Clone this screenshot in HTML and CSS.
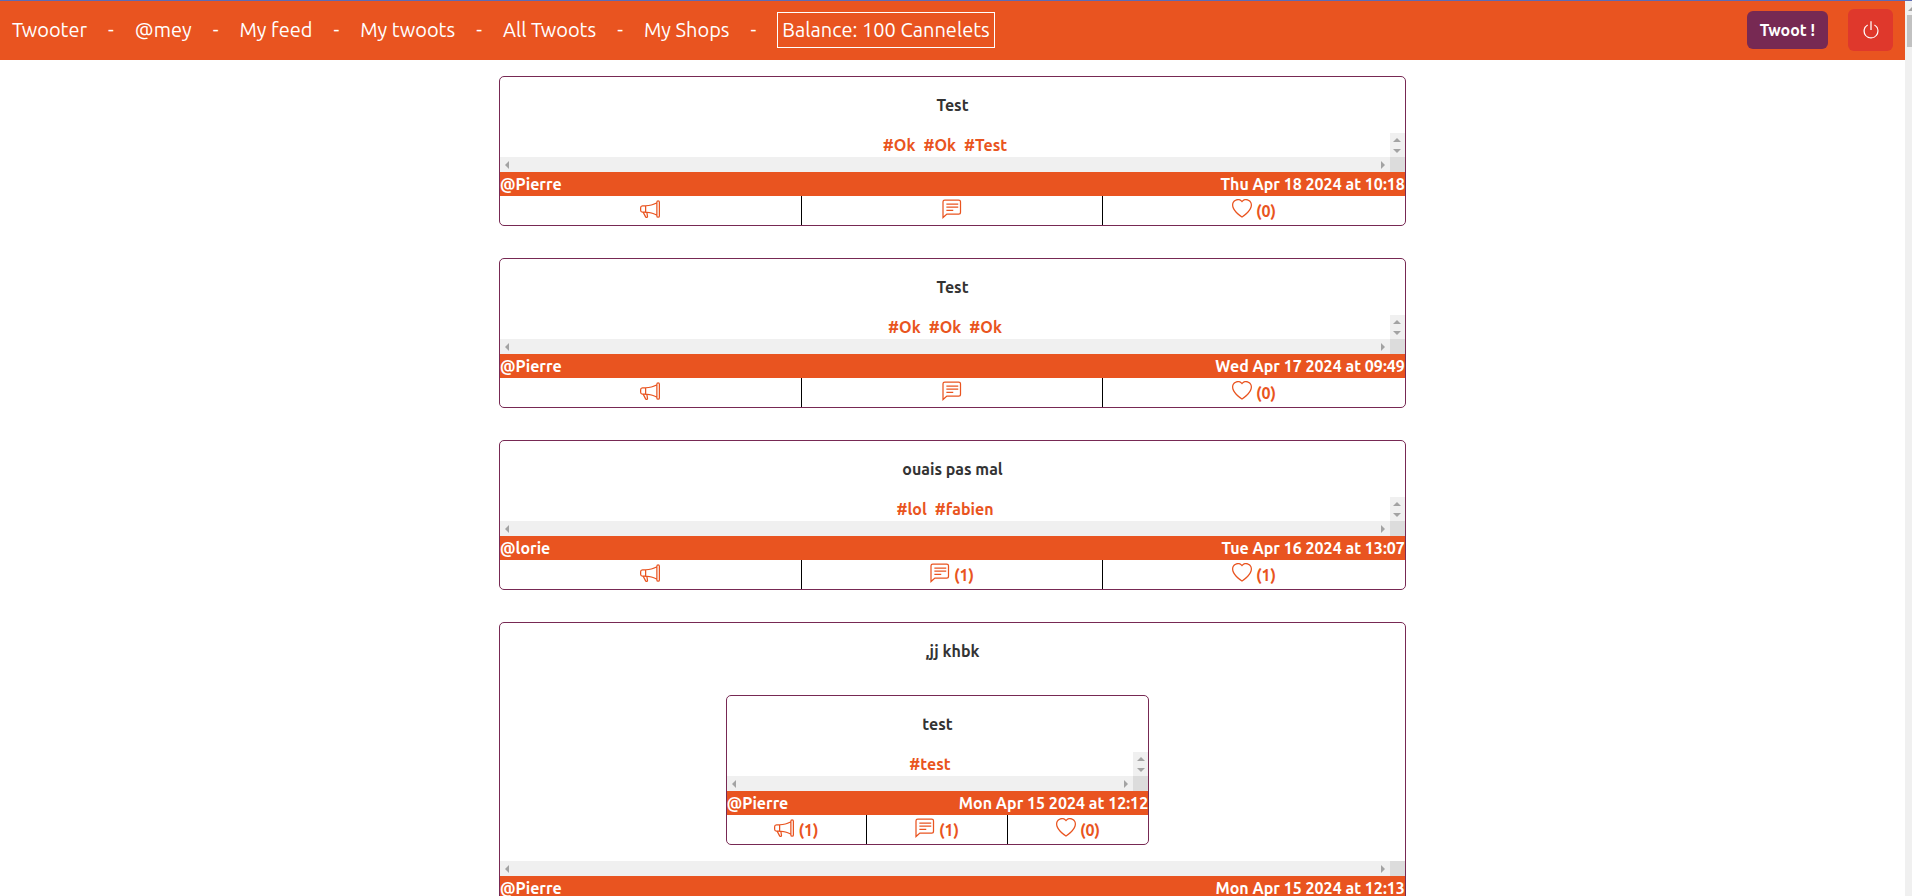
FILE: index.html
```
<!DOCTYPE html>
<html lang="en">
<head>
<meta charset="utf-8">
<title>Twooter</title>
<link rel="stylesheet" href="styles.css">
</head>
<body>
<svg class="sprite" aria-hidden="true">
  <symbol id="megaphone" viewBox="0 0 16 16"><path d="M13 2.5a1.5 1.5 0 0 1 3 0v11a1.5 1.5 0 0 1-3 0v-.214c-2.162-1.241-4.49-1.843-6.912-2.083l.405 2.712A1 1 0 0 1 5.51 15.1h-.548a1 1 0 0 1-.916-.599l-1.85-3.49-.202-.003A2.014 2.014 0 0 1 0 9V7a2.02 2.02 0 0 1 1.992-2.013 75 75 0 0 0 2.483-.075c3.043-.154 6.148-.849 8.525-2.199zm1 0v11a.5.5 0 0 0 1 0v-11a.5.5 0 0 0-1 0m-1 1.35c-2.344 1.205-5.209 1.842-8 2.033v4.233q.27.015.537.036c2.568.189 5.093.744 7.463 1.993zm-9 6.215v-4.13a95 95 0 0 1-1.992.052A1.02 1.02 0 0 0 1 7v2c0 .55.448 1.002 1.006 1.009A61 61 0 0 1 4 10.065m-.657.975 1.609 3.037.01.024h.548l-.002-.014-.443-2.966a68 68 0 0 0-1.722-.082z"/></symbol>
  <symbol id="chat" viewBox="0 0 16 16"><path d="M1.5 14.8V2.200Q1.500.800 2.900.800H14Q15.500.800 15.500 2.200V10.500Q15.500 12 14 12H4.600z" transform="translate(-.7 0)" fill="none" stroke="currentColor"/><path d="M3.500 4h9.500M3.500 6.500h9.500M3.500 9h5.500" fill="none" stroke="currentColor"/></symbol>
  <symbol id="heart" viewBox="0 0 16 16"><path d="m8 2.748-.717-.737C5.600.281 2.514.878 1.400 3.053c-.523 1.023-.641 2.500.314 4.385.920 1.815 2.834 3.989 6.286 6.357 3.452-2.368 5.365-4.542 6.286-6.357.955-1.886.838-3.362.314-4.385C13.486.878 10.400.280 8.717 2.010zM8 15C-7.333 4.868 3.279-3.040 7.824 1.143q.090.083.176.171a3 3 0 0 1 .176-.170C12.720-3.042 23.333 4.867 8 15"/></symbol>
</svg>
<div class="window">
  <div class="page">
    <header class="topbar">
      <nav class="menu">
        <a href="#">Twooter</a><span>-</span>
        <a href="#">@mey</a><span>-</span>
        <a href="#">My feed</a><span>-</span>
        <a href="#">My twoots</a><span>-</span>
        <a href="#">All Twoots</a><span>-</span>
        <a href="#">My Shops</a><span>-</span>
        <a href="#" class="balance">Balance: 100 Cannelets</a>
      </nav>
      <div class="session">
        <button class="twoot-button" type="button">Twoot !</button>
        <button class="logout" type="button" aria-label="Log out"><svg viewBox="0 0 16 16"><path d="M7.500 1v7h1V1z"/><path d="M3 8.812a5 5 0 0 1 2.578-4.375l-.485-.874A6 6 0 1 0 11 3.616l-.501.865A5 5 0 1 1 3 8.812"/></svg></button>
      </div>
    </header>
    <main class="feed">
      <article class="twoot">
        <p class="message">Test</p>
        <div class="tags"><div class="links"><a href="#">#Ok</a><a href="#">#Ok</a><a href="#">#Test</a></div><div class="vscroll"><i class="up"></i><i class="down"></i></div></div>
        <div class="hscroll"><i class="left"></i><i class="right"></i><b></b></div>
        <div class="meta"><a href="#">@Pierre</a><time>Thu Apr 18 2024 at 10:18</time></div>
        <div class="actions"><button type="button" aria-label="Retwoot"><svg><use href="#megaphone"/></svg></button><button type="button" aria-label="Comment"><svg><use href="#chat"/></svg></button><button type="button" aria-label="Like"><svg><use href="#heart"/></svg><span>(0)</span></button></div>
      </article>
      <article class="twoot">
        <p class="message">Test</p>
        <div class="tags"><div class="links"><a href="#">#Ok</a><a href="#">#Ok</a><a href="#">#Ok</a></div><div class="vscroll"><i class="up"></i><i class="down"></i></div></div>
        <div class="hscroll"><i class="left"></i><i class="right"></i><b></b></div>
        <div class="meta"><a href="#">@Pierre</a><time>Wed Apr 17 2024 at 09:49</time></div>
        <div class="actions"><button type="button" aria-label="Retwoot"><svg><use href="#megaphone"/></svg></button><button type="button" aria-label="Comment"><svg><use href="#chat"/></svg></button><button type="button" aria-label="Like"><svg><use href="#heart"/></svg><span>(0)</span></button></div>
      </article>
      <article class="twoot">
        <p class="message">ouais pas mal</p>
        <div class="tags"><div class="links"><a href="#">#lol</a><a href="#">#fabien</a></div><div class="vscroll"><i class="up"></i><i class="down"></i></div></div>
        <div class="hscroll"><i class="left"></i><i class="right"></i><b></b></div>
        <div class="meta"><a href="#">@lorie</a><time>Tue Apr 16 2024 at 13:07</time></div>
        <div class="actions"><button type="button" aria-label="Retwoot"><svg><use href="#megaphone"/></svg></button><button type="button" aria-label="Comment"><svg><use href="#chat"/></svg><span>(1)</span></button><button type="button" aria-label="Like"><svg><use href="#heart"/></svg><span>(1)</span></button></div>
      </article>
      <article class="twoot">
        <p class="message">,jj khbk</p>
        <div class="quoted">
          <article class="twoot">
            <p class="message">test</p>
            <div class="tags"><div class="links"><a href="#">#test</a></div><div class="vscroll"><i class="up"></i><i class="down"></i></div></div>
            <div class="hscroll"><i class="left"></i><i class="right"></i><b></b></div>
            <div class="meta"><a href="#">@Pierre</a><time>Mon Apr 15 2024 at 12:12</time></div>
            <div class="actions"><button type="button" aria-label="Retwoot"><svg><use href="#megaphone"/></svg><span>(1)</span></button><button type="button" aria-label="Comment"><svg><use href="#chat"/></svg><span>(1)</span></button><button type="button" aria-label="Like"><svg><use href="#heart"/></svg><span>(0)</span></button></div>
          </article>
        </div>
        <div class="hscroll"><i class="left"></i><i class="right"></i><b></b></div>
        <div class="meta"><a href="#">@Pierre</a><time>Mon Apr 15 2024 at 12:13</time></div>
        <div class="actions"><button type="button" aria-label="Retwoot"><svg><use href="#megaphone"/></svg></button><button type="button" aria-label="Comment"><svg><use href="#chat"/></svg></button><button type="button" aria-label="Like"><svg><use href="#heart"/></svg><span>(0)</span></button></div>
      </article>
    </main>
  </div>
  <div class="page-scroll"><i class="up"></i><b></b></div>
</div>
</body>
</html>
```
FILE: styles.css
```
* { box-sizing: border-box; }
body {
  margin: 0;
  background: #fff;
  color: #333;
  font: 16px/24px Ubuntu, "Noto Sans", sans-serif;
}
a { color: inherit; text-decoration: none; }
button { font: inherit; color: inherit; border: 0; padding: 0; background: none; cursor: pointer; }
.sprite { display: none; }
.window {
  display: flex;
  height: 100vh;
  overflow: hidden;
  border-top: 1px solid #5c6bb5;
}
.page { flex: 1; min-width: 0; }

.topbar {
  display: flex;
  justify-content: space-between;
  align-items: center;
  padding: 8px 12px 9px;
  background: #e95420;
  color: #fff;
}
.menu { display: flex; align-items: center; gap: 21px; font-size: 20px; line-height: 28px; }
.balance { border: 1px solid #fff; padding: 3px 4px; }
.session { display: flex; align-items: center; gap: 20px; }
.twoot-button {
  padding: 7px 13px;
  border-radius: 6px;
  background: #772953;
  font-weight: 700;
}
.logout {
  display: flex;
  align-items: center;
  justify-content: center;
  width: 45px;
  height: 42px;
  border-radius: 6px;
  background: #df382c;
}
.logout svg { width: 20px; height: 20px; fill: #fff; }

.feed {
  display: flex;
  flex-direction: column;
  align-items: center;
  gap: 32px;
  padding-top: 16px;
}
.twoot {
  width: 47.6%;
  border: 1px solid #772953;
  border-radius: 5px;
  background: #fff;
  font-weight: 700;
  overflow: hidden;
}
.message { margin: 16px 0; text-align: center; }
.tags { display: flex; color: #e95420; }
.links { display: flex; flex: 1; justify-content: center; gap: 8px; }
.quoted { display: flex; justify-content: center; padding: 16px 30px 16px 0; }
.quoted .twoot { width: 48.4%; }

.up, .down, .left, .right { width: 0; height: 0; border: 4px solid transparent; }
.up { border-top: 0; border-bottom-color: #a3a3a3; }
.down { border-bottom: 0; border-top-color: #a3a3a3; }
.left { border-left: 0; border-right-color: #a3a3a3; }
.right { border-right: 0; border-left-color: #a3a3a3; }
.vscroll {
  display: flex;
  flex-direction: column;
  align-items: center;
  justify-content: center;
  gap: 7px;
  width: 15px;
  background: #f0f0f0;
}
.hscroll { display: flex; align-items: center; height: 15px; padding-left: 5px; background: #f0f0f0; }
.hscroll .right { margin: 0 5px 0 auto; }
.hscroll b { width: 15px; height: 15px; background: #dcdcdc; }

.meta { display: flex; justify-content: space-between; background: #e95420; color: #fff; }
.actions { display: grid; grid-template-columns: repeat(3, 1fr); height: 29px; color: #e95420; }
.actions button { display: flex; justify-content: center; gap: 4px; padding-top: 3px; font-weight: 700; }
.actions button:not(:last-child) { border-right: 1px solid #000; }
.actions svg { width: 20px; height: 20px; fill: currentColor; }

.page-scroll { width: 7px; overflow: hidden; background: #f0f0f0; }
.page-scroll .up { display: block; margin: 6px 0 4px 3px; }
.page-scroll b { display: block; width: 12px; height: 32px; margin-left: 2px; background: #c1c1c1; }
```
